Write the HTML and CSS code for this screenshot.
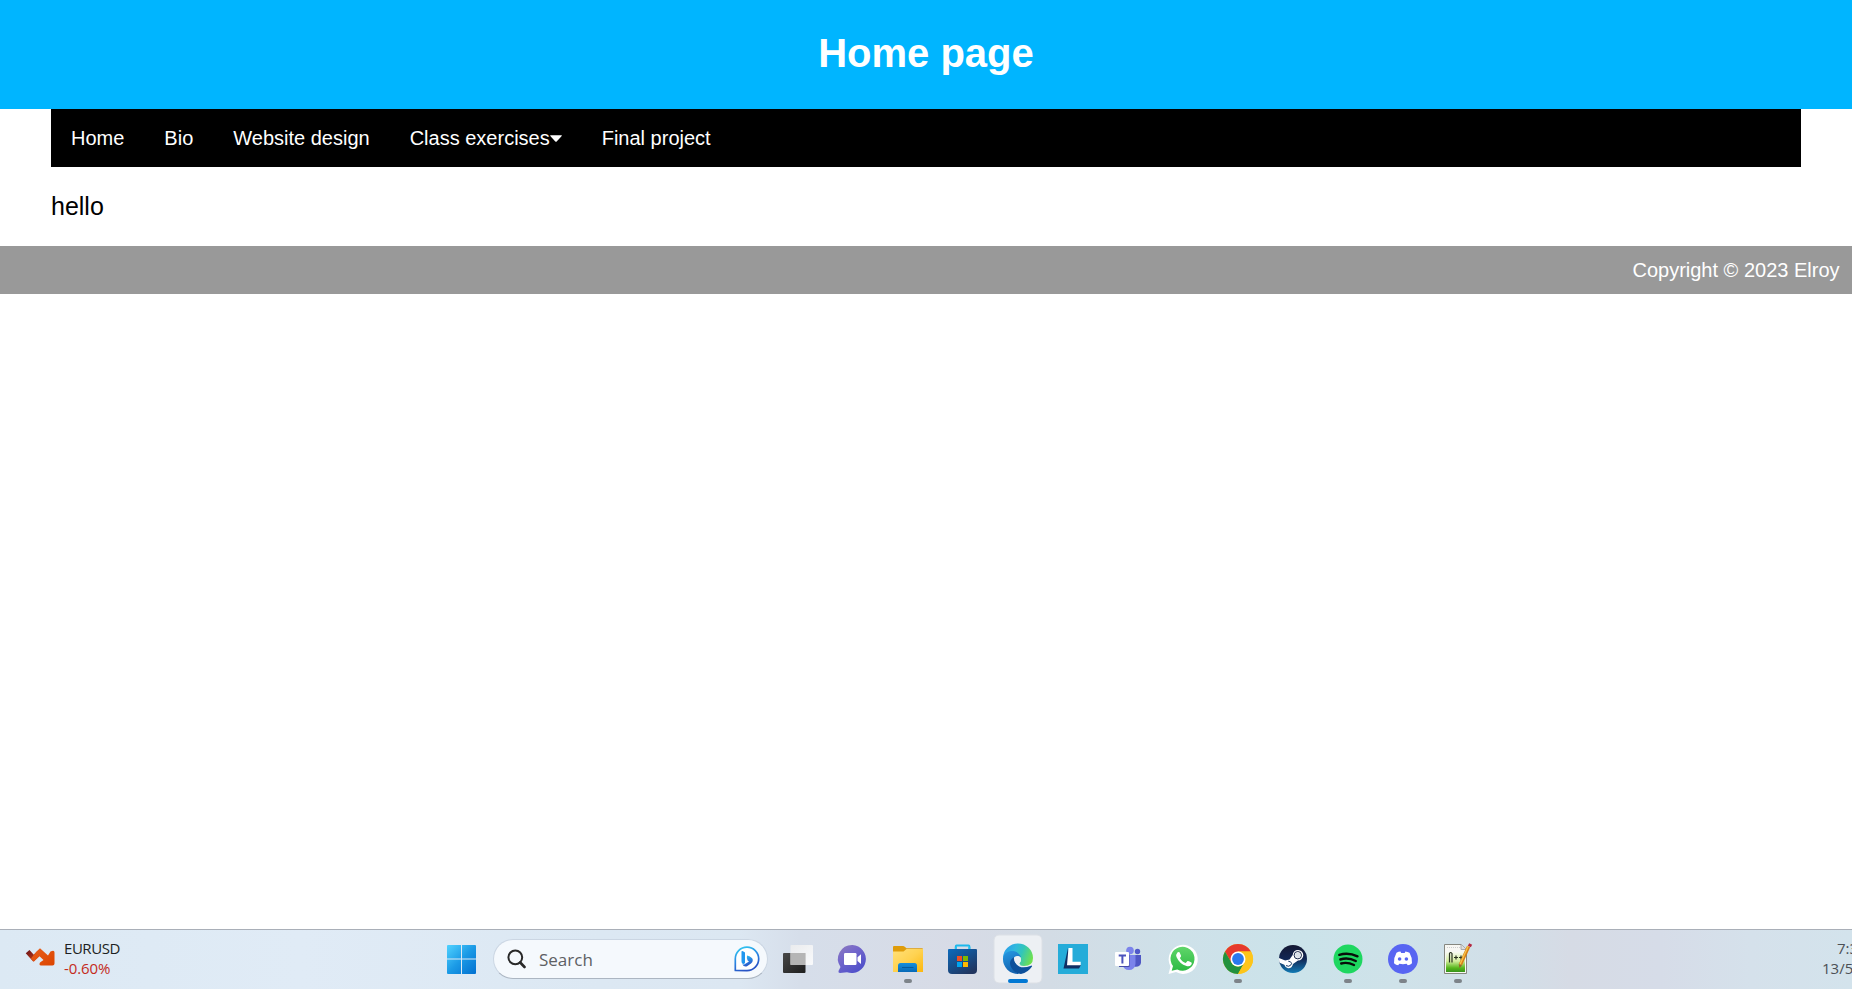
FILE: index.html
```html
<!DOCTYPE html>
<html lang="en">
<head>
<meta charset="utf-8">
<title>Home page</title>
<link rel="stylesheet" href="styles.css">
</head>
<body>
<header class="page-header"><h1>Home page</h1></header>
<nav class="nav">
  <a>Home</a><a>Bio</a><a>Website design</a><a>Class exercises<svg class="caret" width="12" height="7" viewBox="0 0 12 7"><path d="M.6.2h10.800q.8.2.3.9L6.700 6.500q-.7.6-1.400 0L.3 1.100Q-.1.4.6.2z" fill="#fff"/></svg></a><a>Final project</a>
</nav>
<main class="content"><p>hello</p></main>
<footer class="footer">Copyright © 2023 Elroy</footer>

<div class="taskbar">
  <div class="widget">
    <svg width="30" height="18" viewBox="0 0 30 18">
      <defs><linearGradient id="w1" x2="1" y2="1"><stop offset="0" stop-color="#74191a"/><stop offset="1" stop-color="#c43d13"/></linearGradient><linearGradient id="w2" x2="1" y2="1"><stop stop-color="#e8601a"/><stop offset="1" stop-color="#dc4400"/></linearGradient></defs>
      <path d="M2.600 3.600L8.500 10.200L13.500 5.500" fill="none" stroke="url(#w1)" stroke-width="5"/>
      <path d="M11.500 3.500L15 .3L23 7.400L25.500 3.600Q29.500 1.500 29.500 4.500V15.500Q29.500 17.500 27.500 17.500H16Q13.500 17 15 14.500L18.500 12L14.500 8.300L9 13.500L6 10.500z" fill="url(#w2)"/>
    </svg>
    <div class="widget-text"><span class="ticker">EURUSD</span><span class="change">-0.60%</span></div>
  </div>
  <div class="dock">
    <svg class="slot" viewBox="0 0 55 60">
      <defs><linearGradient id="s1" x1="13" y1="16" x2="42" y2="45" gradientUnits="userSpaceOnUse"><stop stop-color="#50d2ff"/><stop offset=".5" stop-color="#1b9ae6"/><stop offset="1" stop-color="#0270d0"/></linearGradient></defs>
      <path d="M14 16H27V29.500H13V17q0-1 1-1zM28 16H41q1 0 1 1V29.500H28zM13 30.500H27V45H14q-1 0-1-1zM28 30.500H42V44q0 1-1 1H28z" fill="url(#s1)"/>
    </svg>
    <div class="search">
      <svg width="19" height="20" viewBox="0 0 19 20" fill="none" stroke="#292929"><circle cx="8.300" cy="8.300" r="6.900" stroke-width="2"/><path d="M13.200 13.500L17.500 18" stroke-width="2.600" stroke-linecap="round"/></svg>
      <span>Search</span>
      <svg class="bing" width="26" height="26" viewBox="0 0 26 26">
        <defs><linearGradient id="b1" x1="0" y1="0" x2=".4" y2="1"><stop stop-color="#31d0f2"/><stop offset=".55" stop-color="#2b87e3"/><stop offset="1" stop-color="#2854c5"/></linearGradient></defs>
        <path d="M1.300 24.500V13A11.700 11.700 0 1 1 13 24.600z" fill="#fff" stroke="url(#b1)" stroke-width="1.700" stroke-linejoin="round"/>
        <path d="M7.500 5.500Q7.600 4.500 9 5.200L11 6.400V17Q9.500 19 8 17.300Q7.500 16.500 7.500 15z" fill="#2197ef"/>
        <path d="M13 9.500Q18.500 11 18.800 14Q18.800 16 17 17.500L13 20.200Q10 21.200 8.200 18.200Q9.500 19 11 18L15 15.500L13.600 14.500Q12.500 11 13 9.500z" fill="url(#b1)"/>
      </svg>
    </div>
    <svg class="slot" viewBox="0 0 55 60">
      <defs><linearGradient id="t1" x2="1" y2="1"><stop stop-color="#484848"/><stop offset="1" stop-color="#1e1e1e"/></linearGradient><linearGradient id="t2" x2="1" y2="1"><stop stop-color="#eee"/><stop offset="1" stop-color="#fff"/></linearGradient></defs>
      <rect x="13" y="24" width="22.500" height="20" rx="1" fill="url(#t1)"/><rect x="20.500" y="16" width="22.500" height="20" rx="1" fill="url(#t2)" opacity=".85"/><path d="M20.500 24h15v12h-15z" fill="#b5b5b5"/>
    </svg>
    <svg class="slot" viewBox="0 0 55 60">
      <defs><linearGradient id="c1" x1="0" x2=".7" y2="1"><stop stop-color="#8d7bbd"/><stop offset=".4" stop-color="#7568cb"/><stop offset="1" stop-color="#4e4fca"/></linearGradient></defs>
      <path d="M27.500 16A14.200 14 0 1 1 22 43.200L15 44Q13 43.800 13.500 42L15.500 38A14.200 14 0 0 1 27.500 16z" fill="url(#c1)"/>
      <rect x="19" y="24" width="12.500" height="12" rx="1.200" fill="#fff"/><path d="M32.500 28.200L36 25.200V35L32.500 32z" fill="#fff"/>
    </svg>
    <svg class="slot" viewBox="0 0 55 60">
      <defs><linearGradient id="f1" x2="1" y2="1"><stop stop-color="#ffe07a"/><stop offset=".5" stop-color="#ffd250"/><stop offset="1" stop-color="#fcb70d"/></linearGradient><linearGradient id="f2" y2="1" x2="0"><stop stop-color="#168fdd"/><stop offset="1" stop-color="#0769b7"/></linearGradient></defs>
      <path d="M13 18q0-1 1-1h9q1 0 2 1l1.500 1.300H42q1 0 1 1V30H13z" fill="#df9c0a"/><path d="M13 22.500H23.500L26.500 20H43V43H13z" fill="url(#f1)"/>
      <path d="M18 43V36.500Q18 34 20.500 34H34.500Q37 34 37 36.500V43z" fill="url(#f2)"/><path d="M22 38.500H33.500" stroke="#075b9c"/>
      <rect class="running" x="24" y="50" width="8" height="4" rx="2"/>
    </svg>
    <svg class="slot" viewBox="0 0 55 60">
      <defs><linearGradient id="m1" x2=".7" y2="1"><stop stop-color="#0c6bbd"/><stop offset="1" stop-color="#213660"/></linearGradient></defs>
      <path d="M20.800 22V17.200Q20.800 16.500 21.500 16.500H33.600Q34.400 16.500 34.400 17.200V22" fill="none" stroke="#1cb8ec" stroke-width="1.900"/>
      <path d="M14 20H41q1 0 1 1V41q0 4-4 4H17q-4 0-4-4V21q0-1 1-1z" fill="url(#m1)"/><path d="M20.800 20V18M34.400 20V18" stroke="#20c3f3" stroke-width="1.900"/>
      <path d="M22 27h5v5h-5z" fill="#f25022"/><path d="M28 27h5v5h-5z" fill="#7fba00"/><path d="M22 33h5v5h-5z" fill="#00a4ef"/><path d="M28 33h5v5h-5z" fill="#ffb900"/>
    </svg>
    <svg class="slot" viewBox="0 0 55 60">
      <defs><linearGradient id="e1" x1="0" y1=".3" x2="1" y2=".6"><stop stop-color="#299dea"/><stop offset=".35" stop-color="#31b9dd"/><stop offset=".6" stop-color="#32c5bb"/><stop offset="1" stop-color="#70e24c"/></linearGradient><linearGradient id="e2" y2="1" x2=".3"><stop stop-color="#2499e3"/><stop offset="1" stop-color="#1463b0"/></linearGradient></defs>
      <rect x="4" y="6" width="48" height="48" rx="5" fill="#edf0f4" stroke="#dce0e6"/>
      <path d="M13 29A15 14.500 0 0 1 43 29Q43 37 34 37Q29 37 29 34.500Q32 32 30 28Q23 19 13 29z" fill="url(#e1)"/>
      <path d="M13 29C15 20 28 20 31 28Q25 25 22.500 31Q21 39 29 45A15 15 0 0 1 13 29z" fill="url(#e2)"/>
      <path d="M24 28Q18 32 21 38Q24 44 31 45Q38 43.500 42 37.500Q42.400 36.200 41 36.700Q30 41 25.500 34Q23.500 31 24 28z" fill="#0d509b"/>
      <path d="M26 28Q31 26 31 30.500Q31 32.500 29.500 34Q29 35.500 31.500 36.400Q27 37 25.200 33Q24 30 26 28z" fill="#edf0f4"/>
      <rect x="18" y="50" width="20" height="4" rx="2" fill="#0078d4"/>
    </svg>
    <svg class="slot" viewBox="0 0 55 60">
      <path d="M13 15H43V45H13z" fill="#25acd9"/><path d="M23 19L18.500 39.500H34L36 36L25 34z" fill="#102f64"/><path d="M23.500 19H27.500V32.800H35.700V36.200H22z" fill="#fff"/>
    </svg>
    <svg class="slot" viewBox="0 0 55 60">
      <circle cx="37.500" cy="22.500" r="2.700" fill="#5059c9"/><circle cx="30" cy="21.500" r="3.800" fill="#7b83eb"/>
      <path d="M33 26H41V34Q40 38.500 34 37.500z" fill="#4f57c5"/><path d="M24 26H35.500V35Q34.500 41 29 41T22.500 35z" fill="#7b83eb"/>
      <path d="M28 25h1.500v13H19v-1z" fill="#464ba8"/><rect x="15" y="23" width="14" height="14" rx="1" fill="#fff"/><path d="M18.700 26.500H26M22.400 26.500V34.500" stroke="#4b53bc" stroke-width="2"/>
    </svg>
    <svg class="slot" viewBox="0 0 55 60">
      <defs><linearGradient id="a1" x2="0" y2="1"><stop stop-color="#60d66a"/><stop offset="1" stop-color="#2dba43"/></linearGradient></defs>
      <path d="M13.500 45L15.500 37.500A14.600 14.600 0 1 1 21 43z" fill="#fff"/><path d="M16.700 41.800L18 37A12 12 0 1 1 22.300 40.500z" fill="url(#a1)"/>
      <path d="M22.400 23.600Q23.300 22.500 24.500 23.200L26.100 26.800Q26.300 27.500 24.900 29Q27 33 30.700 34L32.500 32Q33 31.700 34 32.300L36.500 33.500Q37.200 34 36.300 35.700Q34.500 38 31.500 37Q24.500 35 21.500 28Q20.700 25.500 22.400 23.600z" fill="#fff"/>
    </svg>
    <svg class="slot" viewBox="0 0 55 60">
      <circle cx="28" cy="30" r="15" fill="#fdc51b"/><path d="M15 22.500A15 15 0 0 1 41 22.500H28L21.500 33.800z" fill="#e6392d"/><path d="M15 22.500L21.500 33.800Q24 38 29 37.500L34 34L28 45A15 15 0 0 1 15 22.500z" fill="#21913e"/>
      <path d="M34.500 33.800L28 45A15 15 0 0 0 41 22.500H28z" fill="#fdc51b"/><circle cx="28" cy="30" r="7.500" fill="#fff"/><circle cx="28" cy="30" r="5.900" fill="#2a79ed"/>
      <rect class="running" x="24" y="50" width="8" height="4" rx="2"/>
    </svg>
    <svg class="slot" viewBox="0 0 55 60">
      <defs><linearGradient id="v1" x2="0" y2="1"><stop stop-color="#141832"/><stop offset=".5" stop-color="#112654"/><stop offset="1" stop-color="#127bb5"/></linearGradient><clipPath id="vc"><circle cx="28" cy="30" r="14"/></clipPath></defs>
      <circle cx="28" cy="30" r="14" fill="url(#v1)"/><g clip-path="url(#vc)"><path d="M13 28.500L20.200 31.500L24.500 30.500L27.700 26A5.300 5.300 0 1 1 33 31.500L28 35Q27 39.500 23 39.200Q20 38.500 19.300 35.800L13 33z" fill="#fff"/><circle cx="32.800" cy="26.200" r="3.700" fill="#fff" stroke="#152346" stroke-width="1"/><circle cx="32.800" cy="26.200" r="2.600" fill="#dae1e9"/><path d="M21 36.600Q24 38.300 26 35.800T23.300 32.200" fill="none" stroke="#153664"/></g>
    </svg>
    <svg class="slot" viewBox="0 0 55 60">
      <circle cx="28" cy="30" r="14.500" fill="#1ed760"/><path d="M19.300 25.800Q28.500 23 37.500 27.300M20.300 30.500Q28 28 35.800 32M21.200 34.500Q27.500 32.800 34 36" fill="none" stroke="#080d0a" stroke-width="2.400" stroke-linecap="round"/>
      <rect class="running" x="24" y="50" width="8" height="4" rx="2"/>
    </svg>
    <svg class="slot" viewBox="0 0 55 60">
      <circle cx="28" cy="30" r="15" fill="#5865f2"/><path d="M21.500 23.800Q23.500 22.700 25.500 22.600L26.200 23.900H29.700L30.400 22.600Q32.600 22.800 34.500 23.800Q37.500 29 37 34.200Q35 36 32.800 36.300L31.600 34.700Q28 35.600 24.300 34.700L23.200 36.300Q21 36 19 34.200Q18.500 29 21.500 23.800z" fill="#fff"/><circle cx="24.600" cy="30" r="1.800" fill="#5865f2"/><circle cx="31.400" cy="30" r="1.800" fill="#5865f2"/>
      <rect class="running" x="24" y="50" width="8" height="4" rx="2"/>
    </svg>
    <svg class="slot" viewBox="0 0 55 60">
      <defs><linearGradient id="n1" x2="0" y2="1"><stop stop-color="#f8faf2"/><stop offset=".45" stop-color="#d5ee9e"/><stop offset=".8" stop-color="#56b61b"/><stop offset="1" stop-color="#37931c"/></linearGradient></defs>
      <path d="M14.500 15.500H31L36.500 20.500V44.500H14.500z" fill="#f7f7f3" stroke="#85877f"/><path d="M16 23H35V43H16z" fill="url(#n1)"/><path d="M31 15.500V20.500H36.500" fill="#ddd" stroke="#aaa"/><path d="M17 18.500H31" stroke="#ccc" stroke-dasharray="1 1"/>
      <path d="M19.500 33.500V24.500Q20.500 22.500 22 24.500V33.500M24 28.500h4M26 26.500v4M29 28.500h4M31 26.500v4" fill="none" stroke="#29311e" stroke-width="1.200"/>
      <path d="M38.600 17.500L30.500 35.500" stroke="#d77f16" stroke-width="3.400"/><path d="M38.100 17.300L30.200 35" stroke="#f8c34a" stroke-width="1.400"/><path d="M28.700 35L32 36.500L29.500 39z" fill="#99622c"/><path d="M38.500 15.500L41.500 17" stroke="#b42842" stroke-width="3"/>
      <rect class="running" x="24" y="50" width="8" height="4" rx="2"/>
    </svg>
  </div>
  <div class="clock"><span>7:3</span><span>13/5</span></div>
</div>
</body>
</html>
```
FILE: styles.css
```css
* { box-sizing: border-box; }
body { margin: 0; height: 989px; overflow: hidden; display: flex; flex-direction: column; background: #fff; font-family: "Liberation Sans", Arial, sans-serif; }
.page-header { height: 109px; flex: none; background: #00b5ff; color: #fff; text-align: center; padding-top: 30px; }
.page-header h1 { margin: 0; font-size: 40px; line-height: 46px; }
.nav { height: 58px; flex: none; margin: 0 51px; background: #000; color: #fff; display: flex; font-size: 20px; line-height: 23px; }
.nav a { padding: 18px 20px 17px; white-space: nowrap; }
.caret { vertical-align: 3px; }
.content { height: 79px; flex: none; padding: 25px 51px 0; font-size: 25px; line-height: 29px; }
.content p { margin: 0; }
.footer { height: 48px; flex: none; background: #999; color: #fff; font-size: 20px; line-height: 23px; padding: 13px 12.5px 12px; text-align: right; }
.taskbar { height: 60px; flex: none; margin-top: auto; display: flex; border-top: 1px solid #a9afb8; background: linear-gradient(90deg, #dce9f4 0, #e0ebf6 300px, #dce8f3 600px, #dce7f2 740px, #d6deea 800px, #d7dbe6 960px, #d3dce5 1050px, #cee1e9 1180px, #cbe3ea 1300px, #cfe2e9 1400px, #d1dfe8 1500px, #d6dbe5 1570px, #d6dce8 1660px, #d5e1eb 1750px, #d3e3ec 1852px); font-family: "Open Sans", "Noto Sans", sans-serif; }
.widget { width: 433px; flex: none; display: flex; padding-left: 25px; }
.widget > svg { margin-top: 18px; }
.widget-text { margin: 8px 0 0 9px; display: flex; flex-direction: column; font-size: 15px; line-height: 20px; }
.ticker { color: #1c1f22; letter-spacing: -.45px; }
.change { color: #c42b1c; letter-spacing: -.1px; }
.dock { display: flex; flex: none; margin-top: -1px; }
.slot { width: 55px; height: 60px; display: block; flex: none; margin-left: 1px; }
.search ~ .slot { margin-left: 0; }
.search { width: 275px; height: 40px; margin: 10px 2px 0 4px; display: flex; align-items: center; border-radius: 20px; background: #f5f9fd; border: 1px solid #cbd6e3; border-bottom-color: #acb6c2; padding: 0 7px 0 13px; color: #5d6064; font-size: 17px; }
.search span { margin-left: 13px; }
.bing { margin-left: auto; }
.running { fill: #7d8389; }
.clock { margin-left: auto; width: 30px; flex: none; display: flex; flex-direction: column; overflow: hidden; white-space: nowrap; color: #4c5055; font-size: 15px; line-height: 20px; padding-top: 8px; }
.clock span:first-child { padding-left: 15px; }
```
